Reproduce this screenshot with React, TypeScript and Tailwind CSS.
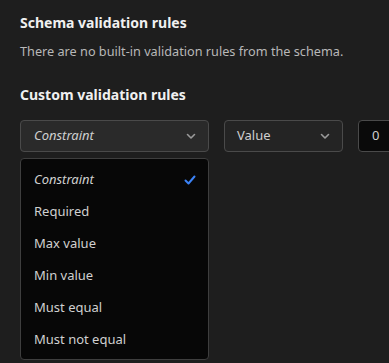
import React from "react";

const Chevron = () => (
  <svg width="12" height="12" viewBox="0 0 12 12" fill="none" className="shrink-0">
    <path d="M2.5 4.5L6 8L9.5 4.5" stroke="#9a9a9a" strokeWidth="1.6" strokeLinecap="round" strokeLinejoin="round" />
  </svg>
);

const Check = () => (
  <svg width="14" height="14" viewBox="0 0 14 14" fill="none">
    <path d="M2.5 7.5L5.5 10.5L11.5 3.5" stroke="#3b82f6" strokeWidth="2" strokeLinecap="round" strokeLinejoin="round" />
  </svg>
);

export default function App() {
  const items = ["Required", "Max value", "Min value", "Must equal", "Must not equal"];
  return (
    <div className="w-[389px] h-[363px] bg-[#1e1e1e] overflow-hidden text-[#e6e6e6]" style={{ fontFamily: '"Noto Sans", sans-serif' }}>
      <div className="pl-5 pt-[11px]">
        <h2 className="text-[14px] font-bold leading-[24px] text-[#f0f0f0]">Schema validation rules</h2>
        <p className="mt-[6px] text-[12.7px] leading-[20px] text-[#b8b8b8]">There are no built-in validation rules from the schema.</p>
        <h2 className="mt-[22px] text-[14px] font-bold leading-[24px] text-[#f0f0f0]">Custom validation rules</h2>
        <div className="mt-[13px] flex gap-[15px] relative">
          <div className="shrink-0 w-[189px] h-[32px] rounded-[4px] border border-[#4a4a4a] bg-[#2a2a2a] flex items-center justify-between pl-[13px] pr-[11px]">
            <span className="italic text-[13px] text-[#cfcfcf]">Constraint</span>
            <Chevron />
          </div>
          <div className="shrink-0 w-[119px] h-[32px] rounded-[4px] border border-[#4a4a4a] bg-[#242424] flex items-center justify-between pl-[12px] pr-[11px]">
            <span className="text-[13px] text-[#cfcfcf]">Value</span>
            <Chevron />
          </div>
          <div className="shrink-0 w-[60px] h-[32px] rounded-[4px] border border-[#4a4a4a] bg-[#0a0a0a] flex items-center pl-[13px]">
            <span className="text-[13px] text-[#cfcfcf]">0</span>
          </div>
          <div className="absolute left-0 top-[38px] w-[189px] h-[202px] rounded-[4px] border border-[#3e3e3e] bg-[#070707] py-[5px] z-10">
            <div className="h-[32px] flex items-center justify-between pl-[13px] pr-[11px]">
              <span className="italic text-[13px] text-[#d0d0d0]">Constraint</span>
              <Check />
            </div>
            {items.map((t) => (
              <div key={t} className="h-[32px] flex items-center pl-[13px]">
                <span className="text-[13px] text-[#d0d0d0]">{t}</span>
              </div>
            ))}
          </div>
        </div>
      </div>
    </div>
  );
}
